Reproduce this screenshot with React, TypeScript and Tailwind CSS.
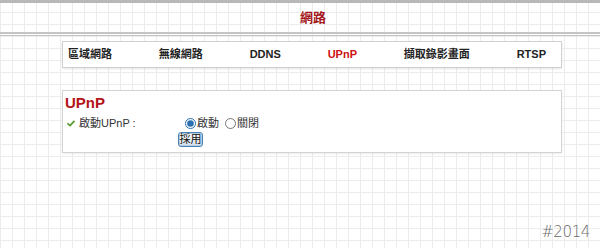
import React, { useState } from 'react';

const tabs = ['區域網路', '無線網路', 'DDNS', 'UPnP', '擷取錄影畫面', 'RTSP'];

const App: React.FC = () => {
  const [enabled, setEnabled] = useState(true);
  const active = 'UPnP';

  return (
    <div className="relative w-[600px] h-[248px] overflow-hidden bg-white bg-[linear-gradient(to_right,#ececec_1px,transparent_1px),linear-gradient(to_bottom,#ececec_1px,transparent_1px)] bg-size-[12px_12px] font-['Liberation_Sans','Noto_Sans_CJK_TC',sans-serif]">
      {/* header */}
      <div className="h-[36px] border-t-[3px] border-[#b8b8b8] flex flex-col">
        <div className="flex-1 flex items-center justify-center pl-[26px]">
          <h1 className="text-[13px] font-bold text-[#a3161a] leading-none">網路</h1>
        </div>
        <div className="h-[4px] border-t-[2px] border-b border-[#c4c4c4]" />
      </div>

      {/* tabs */}
      <div className="mx-[62px] mt-[5px] h-[27px] w-[500px] bg-white border border-[#d0d0d0] shadow-[0_1px_2px_rgba(0,0,0,0.1)] flex items-center justify-between pl-[5px] pr-[15px]">
        {tabs.map(t => (
          <span
            key={t}
            className={`text-[11px] font-bold whitespace-nowrap ${t === active ? 'text-[#cc1111]' : 'text-[#222]'}`}
          >
            {t}
          </span>
        ))}
      </div>

      {/* UPnP panel */}
      <div className="ml-[62px] mt-[22px] w-[500px] h-[63px] bg-white border border-[#d4d4d4] shadow-[0_1px_2px_rgba(0,0,0,0.08)] px-[2px] pt-[3px]">
        <h2 className="text-[15px] font-bold text-[#b4141a] leading-[18px]">UPnP</h2>
        <div className="flex items-center mt-[3px] h-[16px] text-[11px] text-[#333]">
          <span className="w-[14px] flex pl-[2px]">
            <svg width="8" height="7" viewBox="0 0 8 7">
              <path d="M1 3.8 L3 5.6 L7 1.4" fill="none" stroke="#5a9e32" strokeWidth="1.8" strokeLinecap="round" strokeLinejoin="round" />
            </svg>
          </span>
          <span className="w-[106px]">啟動UPnP :</span>
          <label className="flex items-center gap-[1px] mr-[6px]">
            <input type="radio" name="upnp" checked={enabled} onChange={() => setEnabled(true)} className="w-[11px] h-[11px] m-0 accent-[#2a6fb0]" />
            <span>啟動</span>
          </label>
          <label className="flex items-center gap-[1px]">
            <input type="radio" name="upnp" checked={!enabled} onChange={() => setEnabled(false)} className="w-[11px] h-[11px] m-0 accent-[#2a6fb0]" />
            <span>關閉</span>
          </label>
        </div>
        <button className="ml-[113px] mt-[1px] h-[15px] w-[25px] p-0 flex items-center justify-center whitespace-nowrap text-[11px] leading-none text-[#111] border border-[#4a80b4] shadow-[inset_0_0_0_1px_#b3cde4] rounded-[3px] bg-[linear-gradient(to_bottom,#f6f9fc,#d3e0ea)]">
          採用
        </button>
      </div>

      <div className="absolute right-[10px] top-[221px] text-[15px] text-[#6a6a6a] font-['DejaVu_Sans',sans-serif] font-light tracking-tight">
        #2014
      </div>
    </div>
  );
};

export default App;
